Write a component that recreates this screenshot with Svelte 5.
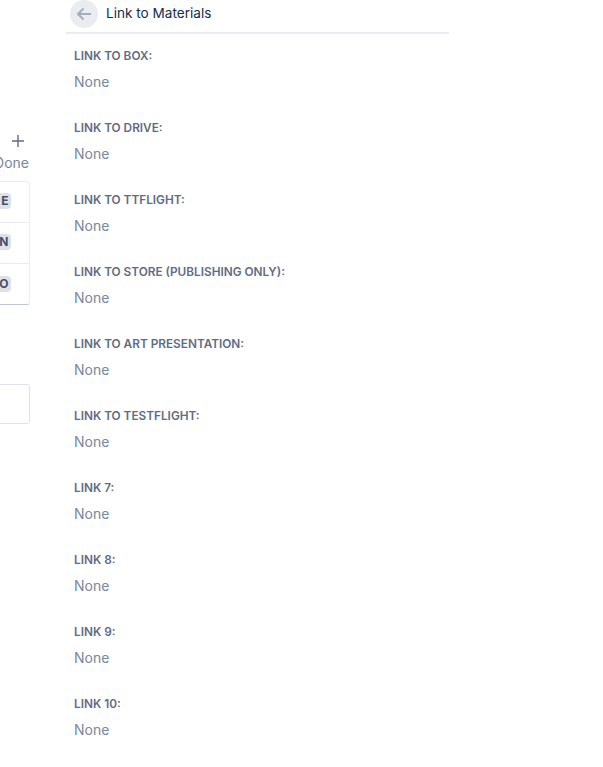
<script>
  const links = [
    'Link to Box:',
    'Link to Drive:',
    'Link to TTFlight:',
    'Link to Store (Publishing Only):',
    'Link to Art Presentation:',
    'Link to TestFlight:',
    'Link 7:',
    'Link 8:',
    'Link 9:',
    'Link 10:'
  ]
  const badges = ['E', 'N', 'O']
</script>

<div class="page">
  <aside class="side">
    <div class="side-head">
      <svg class="plus" width="14" height="14" viewBox="0 0 14 14">
        <path d="M7 1v12M1 7h12" stroke="#5e6c84" stroke-width="1.4" fill="none" />
      </svg>
      <div class="done">Done</div>
    </div>
    <div class="card">
      {#each badges as b}
        <div class="row"><span class="badge">{b}</span></div>
      {/each}
    </div>
    <div class="box"></div>
  </aside>

  <main class="main">
    <header class="head">
      <span class="back">
        <svg width="16" height="14" viewBox="0 0 16 14">
          <path d="M15 7H2M7.5 1.5 2 7l5.5 5.5" stroke="#a5adba" stroke-width="2" fill="none" />
        </svg>
      </span>
      <h1>Link to Materials</h1>
    </header>
    <div class="fields">
      {#each links as label}
        <div class="field">
          <div class="label">{label}</div>
          <div class="value">None</div>
        </div>
      {/each}
    </div>
  </main>
</div>

<style>
  :global(body) {
    background: #fff;
    font-family: Inter, "Liberation Sans", sans-serif;
  }
  .page {
    display: flex;
    align-items: flex-start;
    width: 603px;
    height: 767px;
    overflow: hidden;
  }
  .side {
    width: 30px;
    flex: none;
    margin-right: 36px;
    padding-top: 134px;
    overflow: hidden;
    display: flex;
    flex-direction: column;
    align-items: flex-end;
  }
  .side-head {
    display: flex;
    flex-direction: column;
    align-items: flex-end;
    height: 47px;
  }
  .plus {
    display: block;
    margin-right: 5px;
  }
  .done {
    margin-top: 6px;
    margin-right: 1px;
    font-size: 14px;
    line-height: 18px;
    color: #7a869a;
    white-space: nowrap;
  }
  .card {
    width: 60px;
    flex: none;
    margin-right: 0.5px;
    border: 1px solid #ebecf0;
    border-bottom-color: #c1c7d0;
    border-radius: 3px;
    box-sizing: border-box;
    height: 124px;
  }
  .row {
    height: 41px;
    box-sizing: border-box;
    display: flex;
    align-items: center;
    justify-content: flex-end;
    padding: 0 18px 2px 0;
    border-bottom: 1px solid #ebecf0;
  }
  .row:last-child {
    border-bottom: 0;
  }
  .badge {
    background: #dfe1e6;
    color: #42526e;
    font-size: 12px;
    font-weight: 700;
    line-height: 16px;
    padding: 0 2px 0 20px;
    border-radius: 4px;
  }
  .box {
    width: 60px;
    height: 40px;
    flex: none;
    margin-top: 79px;
    box-sizing: border-box;
    border: 1px solid #dfe1e6;
    border-radius: 3px;
  }
  .main {
    width: 383px;
    flex: none;
  }
  .head {
    display: flex;
    align-items: center;
    height: 28px;
    padding: 0 0 4px 4px;
    border-bottom: 2px solid #ebecf0;
    box-sizing: content-box;
  }
  .back {
    width: 28px;
    height: 28px;
    border-radius: 50%;
    background: #ebecf0;
    display: flex;
    align-items: center;
    justify-content: center;
    margin-right: 8px;
  }
  h1 {
    margin: 0 0 3px;
    font-size: 13.6px;
    font-weight: 400;
    color: #172b4d;
  }
  .fields {
    padding: 12px 8px 0;
  }
  .field {
    height: 72px;
  }
  .label {
    font-size: 11.8px;
    font-weight: 600;
    line-height: 20px;
    text-transform: uppercase;
    color: #5e6c84;
  }
  .value {
    margin-top: 6px;
    font-size: 14px;
    line-height: 20px;
    color: #7a869a;
  }
</style>
